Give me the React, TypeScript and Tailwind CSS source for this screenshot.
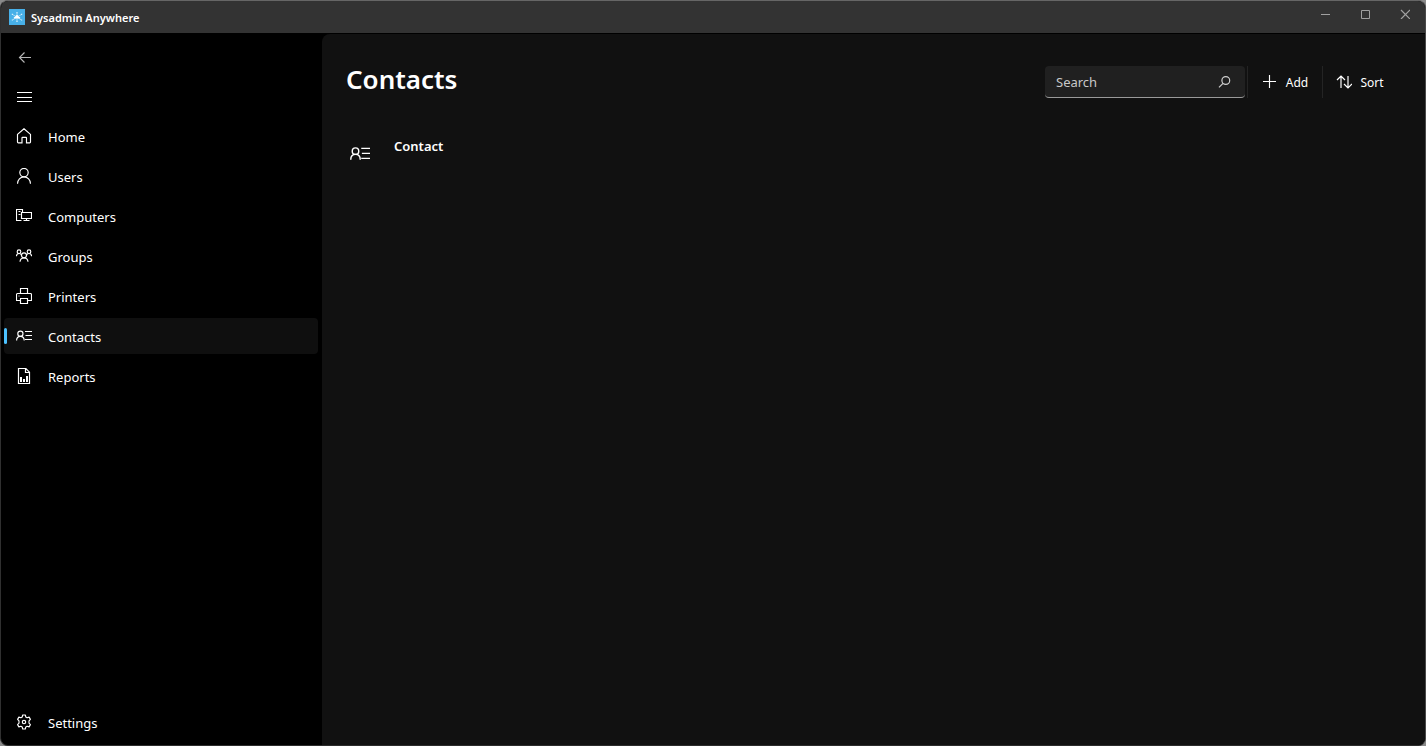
import { useState, type ReactNode } from "react";

type IconProps = { className?: string; children?: ReactNode };

function Icon({ className = "size-4", children }: IconProps) {
  return (
    <svg viewBox="0 0 16 16" fill="none" stroke="currentColor" strokeWidth="1.15" className={`shrink-0 ${className}`} aria-hidden="true">
      {children}
    </svg>
  );
}

const HomeIcon = () => (
  <Icon>
    <path d="M1.5 6.4 8 .7l6.5 5.7v7.6a.8.8 0 0 1-.8.8H10.500V9.800a.5.5 0 0 0-.5-.5H6.500a.5.5 0 0 0-.5.5v5H2.300a.8.8 0 0 1-.8-.8z" />
  </Icon>
);

const UserIcon = () => (
  <Icon>
    <circle cx="8" cy="4.600" r="4.200" />
    <path d="M1.500 15.700c0-3.900 2.900-6.800 6.500-6.800s6.500 2.900 6.500 6.800" />
  </Icon>
);

const ComputerIcon = () => (
  <Icon>
    <path d="M5.500 12.500h-5v-11h6v3M2.500 3.500h2M2.500 6.500h2M5.500 4.500h10v6h-10zM10.500 10.500v2M7.500 12.500h6" />
  </Icon>
);

const GroupIcon = () => (
  <Icon>
    <circle cx="8" cy="7.300" r="2.500" />
    <path d="M4 13.800c.2-2.400 1.700-4 4-4s3.800 1.600 4 4" />
    <circle cx="3" cy="3.700" r="1.800" />
    <circle cx="13" cy="3.700" r="1.800" />
    <path d="M.4 8.200c.1-1.600 1.200-2.700 2.600-2.700 1.200 0 2.100.7 2.500 1.800M15.600 8.200c-.1-1.600-1.200-2.700-2.600-2.700-1.200 0-2.100.7-2.500 1.800" />
  </Icon>
);

const PrinterIcon = () => (
  <Icon>
    <path d="M4.500 5.500v-5h7v5M4.500 12.500h-4v-6a1 1 0 0 1 1-1h13a1 1 0 0 1 1 1v6h-4M4.500 10.500h7v5h-7zM2.500 8h1" />
  </Icon>
);

const ContactIcon = ({ className }: { className?: string }) => (
  <Icon className={className}>
    <circle cx="4.400" cy="5.700" r="2.600" />
    <path d="M.6 12.500c0-2.500 1.500-4.200 3.800-4.200s3.800 1.700 3.800 4.200M9 3.500h7M9.500 7.500h6.500M9 11.500h7" />
  </Icon>
);

const ReportIcon = () => (
  <Icon>
    <path strokeWidth="1.200" d="M2.500.5h7.300l3.700 3.700v11.300h-11zM9.500.5v4h4" />
    <path strokeWidth="2" d="M5 9v5M8 11v3M11 8v6" />
  </Icon>
);

const GearIcon = () => (
  <Icon>
    <circle cx="8" cy="8" r="1.700" />
    <path
      strokeLinejoin="round"
      d="M6.700 1h2.600l.5 2 1.300.7 2-.6 1.300 2.300L13 6.900v2.200l1.400 1.500-1.300 2.300-2-.6-1.300.7-.5 2H6.700l-.5-2-1.300-.7-2 .6-1.300-2.300L3 9.100V6.900L1.600 5.400l1.300-2.300 2 .6L6.200 3z"
    />
  </Icon>
);

const navItems = [
  { label: "Home", icon: <HomeIcon /> },
  { label: "Users", icon: <UserIcon /> },
  { label: "Computers", icon: <ComputerIcon /> },
  { label: "Groups", icon: <GroupIcon /> },
  { label: "Printers", icon: <PrinterIcon /> },
  { label: "Contacts", icon: <ContactIcon /> },
  { label: "Reports", icon: <ReportIcon /> },
];

type NavItemProps = { label: string; icon: ReactNode; active: boolean; onSelect: () => void };

function NavItem({ label, icon, active, onSelect }: NavItemProps) {
  return (
    <button
      type="button"
      onClick={onSelect}
      aria-current={active ? "page" : undefined}
      className={`relative flex h-9 w-full items-center gap-4 rounded px-3 text-left text-[13px] leading-5 ${active ? "bg-[#0f0f0f]" : ""}`}
    >
      {active && <span className="absolute top-2.5 left-0 h-4 w-[3px] rounded-full bg-[#4cc2ff]" />}
      {icon}
      <span className="pt-0.5">{label}</span>
    </button>
  );
}

function TitleBar() {
  return (
    <header className="flex h-8 shrink-0 items-center justify-between bg-[#333333] pl-2">
      <div className="flex items-center gap-1.5">
        <svg viewBox="0 0 16 16" className="size-4" aria-hidden="true">
          <path fill="#48b0e8" d="M0 0h16v16H0z" />
          <path stroke="#a4daf5" strokeWidth="1" d="M8 8V4M8 8v4.500M8 8 3.500 5.500M8 8l4.500-2.500M8 8l-4 2.800M8 8l4 2.800" />
          <path fill="#fff" d="M4.800 9.500h6.400V8.400L9.500 7.200 8.500 6h-1l-1 1.200-1.700 1.200z" />
          <path fill="#d8f0fc" d="M7.400 3h1.200v1.200H7.400zM7.400 11.800h1.200V13H7.400zM2.800 4.800H4V6H2.800zM12 4.800h1.200V6H12zM2.800 10.400H4v1.200H2.800zM12 10.400h1.200v1.200H12z" />
        </svg>
        <span className="pt-0.5 text-[11px] leading-4 font-semibold">Sysadmin Anywhere</span>
      </div>
      <div className="flex h-full pb-1.5 text-[#a0a0a0]">
        <button type="button" aria-label="Minimize" className="grid w-10 place-items-center">
          <svg viewBox="0 0 10 10" className="size-2.5" fill="none" stroke="currentColor"><path d="M1 5.500h9" /></svg>
        </button>
        <button type="button" aria-label="Maximize" className="grid w-10 place-items-center">
          <svg viewBox="0 0 10 10" className="size-2.5" fill="none" stroke="currentColor"><path d="M1.500 1.500h8v8h-8z" /></svg>
        </button>
        <button type="button" aria-label="Close" className="grid w-10 place-items-center">
          <svg viewBox="0 0 10 10" className="size-2.5" fill="none" stroke="currentColor" strokeWidth="1.200"><path d="m1 1 9 9m0-9-9 9" /></svg>
        </button>
      </div>
    </header>
  );
}

export default function App() {
  const [page, setPage] = useState("Contacts");
  const [query, setQuery] = useState("");

  return (
    <div className="flex min-h-screen bg-[#8a8a8a] font-['Noto_Sans','Open_Sans',sans-serif] text-white">
      <div className="flex flex-1 flex-col overflow-hidden rounded-lg border border-t-[#666666] border-r-[#4a4a4a] border-b-[#2c2c2c] border-l-[#303030] bg-black">
        <TitleBar />
        <div className="flex flex-1 pt-px">
          <nav aria-label="Main" className="flex w-80 shrink-0 flex-col gap-1 px-[3px] pt-1 pb-[5px]">
            <button type="button" aria-label="Back" className="flex h-9 w-10 items-center px-3 text-[#b4b4b4]">
              <Icon><path d="M3 9.500h12M8.500 4.500l-5 5 5 5" /></Icon>
            </button>
            <button type="button" aria-label="Toggle navigation" className="flex h-9 w-10 items-center px-3">
              <Icon><path strokeWidth="1" d="M1 4.500h16M1 9.500h16M1 13.500h16" /></Icon>
            </button>
            {navItems.map((item) => (
              <NavItem key={item.label} {...item} active={item.label === page} onSelect={() => setPage(item.label)} />
            ))}
            <div className="mt-auto">
              <NavItem label="Settings" icon={<GearIcon />} active={page === "Settings"} onSelect={() => setPage("Settings")} />
            </div>
          </nav>

          <main className="ml-px min-w-0 flex-1 rounded-tl-lg bg-[#111111] px-6 pt-6">
            <div className="flex items-start justify-between">
              <h1 className="text-[26px] leading-[42px] font-semibold">Contacts</h1>
              <div className="flex items-center pt-2 pr-1">
                <div className="flex h-8 w-50 items-center overflow-hidden rounded border-b border-[#9a9a9a] bg-[#202020] pr-3.5">
                  <input
                    type="text"
                    aria-label="Search"
                    placeholder="Search"
                    value={query}
                    onChange={(event) => setQuery(event.target.value)}
                    className="w-full min-w-0 flex-1 bg-transparent pt-0.5 pl-[11px] text-[13px] outline-none placeholder:text-[#c8c8c8]"
                  />
                  <button type="button" aria-label="Search contacts" className="text-[#cfcfcf]">
                    <svg viewBox="0 0 13 13" className="size-[13px]" fill="none" stroke="currentColor" strokeWidth="1.200">
                      <circle cx="7.800" cy="5.500" r="3.900" />
                      <path d="M5 8.300 1 12.300" />
                    </svg>
                  </button>
                </div>
                <span className="ml-0.5 h-8 w-px bg-[#242424]" />
                <button type="button" className="flex h-8 w-[74px] items-center justify-center gap-2 text-[12px]">
                  <Icon><path strokeWidth="1.150" d="M7.500 1v13M1 7.500h13" /></Icon>
                  <span className="pt-0.5">Add</span>
                </button>
                <span className="h-8 w-px bg-[#242424]" />
                <button type="button" className="flex h-8 w-[74px] items-center justify-center gap-2 text-[12px]">
                  <Icon><path strokeWidth="1.200" d="M5 14V2M1 6l4-4 4 4M12 2v12M8 10l4 4 4-4" /></Icon>
                  <span className="pt-0.5">Sort</span>
                </button>
              </div>
            </div>
            <ul className="pt-9">
              <li>
                <a href="#contact" className="flex items-start gap-6 pl-1">
                  <span className="pt-2"><ContactIcon className="size-5" /></span>
                  <span className="text-[13px] leading-5 font-semibold">Contact</span>
                </a>
              </li>
            </ul>
          </main>
        </div>
      </div>
    </div>
  );
}
